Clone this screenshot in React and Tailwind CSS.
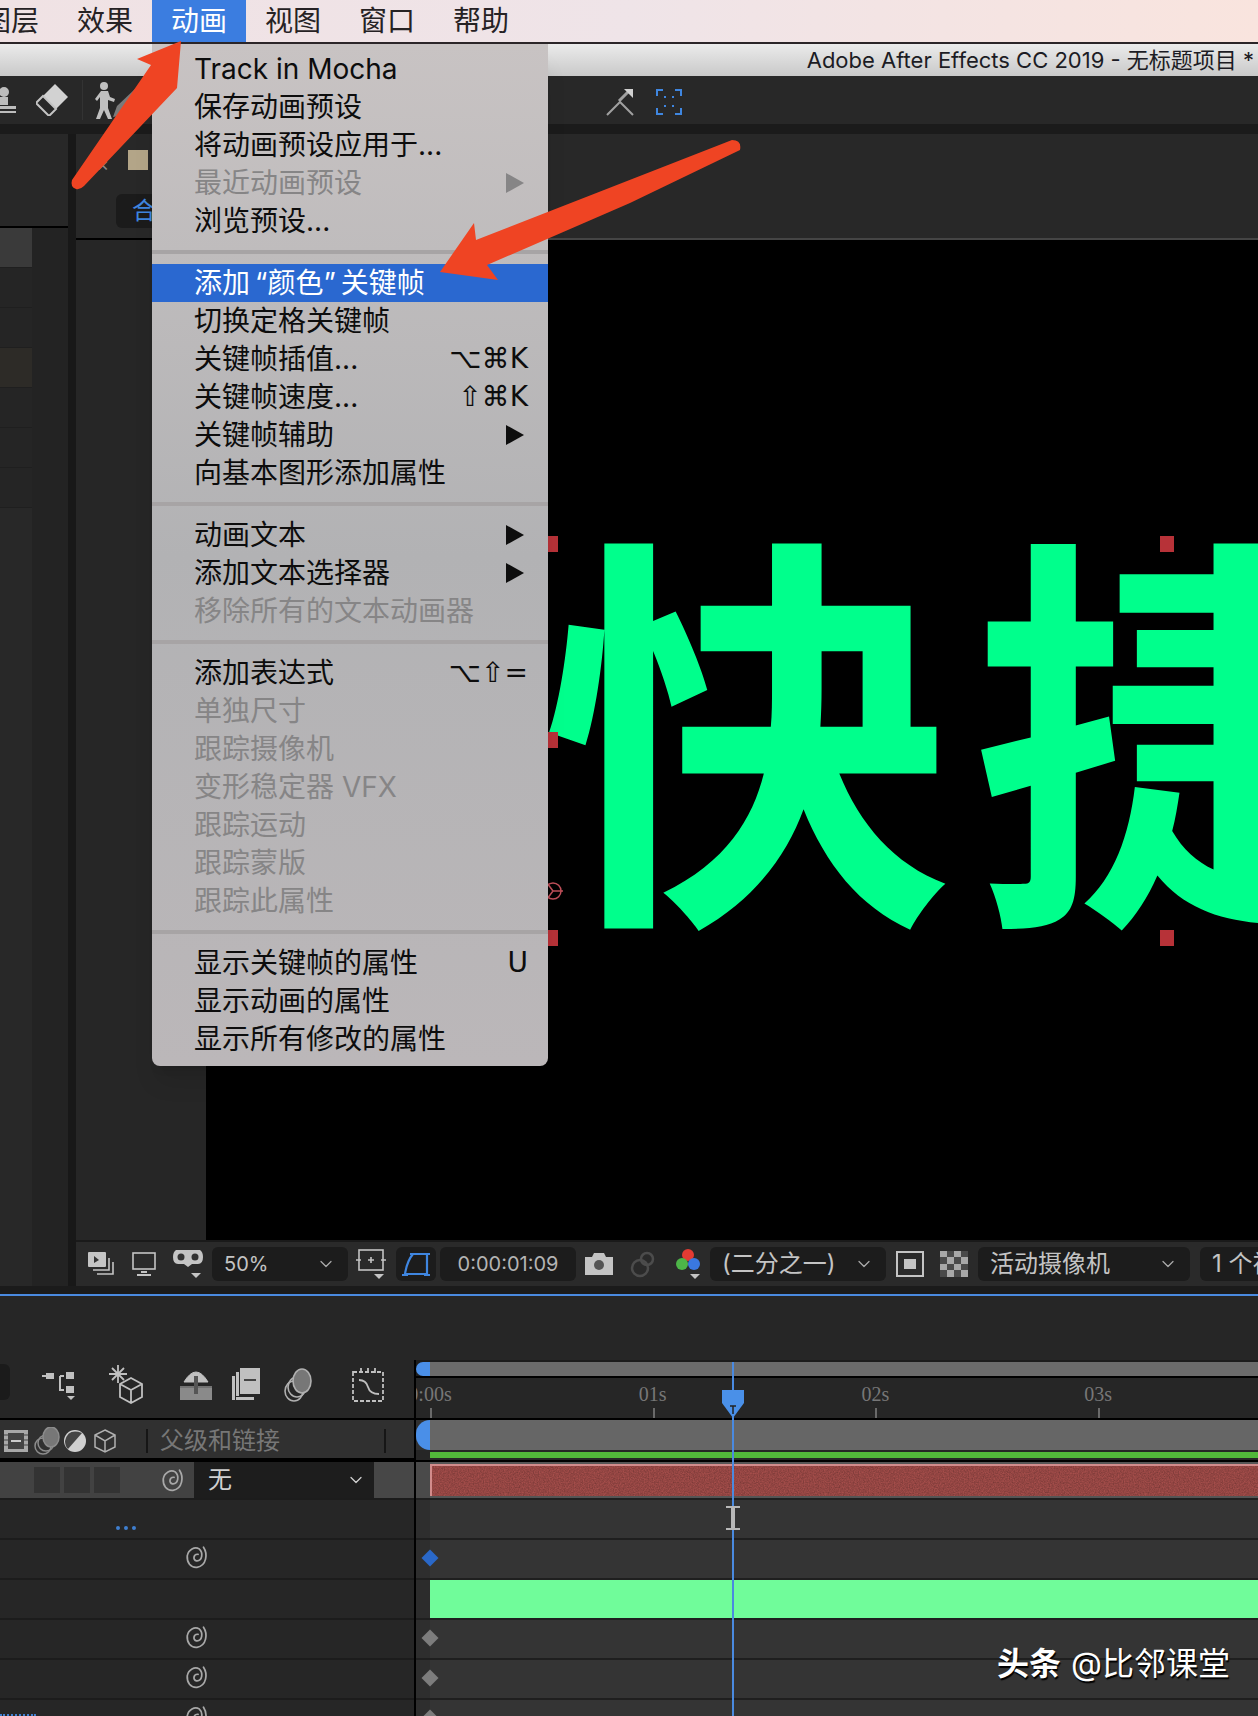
import { ChevronDown } from "lucide-react";

// Top menu bar entries; -ml-9 on the bar clips the first one like the screenshot
const TOP_MENU = ["图层", "效果", "动画", "视图", "窗口", "帮助"];

const MENU_GROUPS = [
  [
    { label: "Track in Mocha" },
    { label: "保存动画预设" },
    { label: "将动画预设应用于..." },
    { label: "最近动画预设", off: true, arrow: true },
    { label: "浏览预设..." },
  ],
  [
    { label: "添加\u2009“颜色”\u2009关键帧", active: true },
    { label: "切换定格关键帧" },
    { label: "关键帧插值...", keys: "⌥⌘K" },
    { label: "关键帧速度...", keys: "⇧⌘K" },
    { label: "关键帧辅助", arrow: true },
    { label: "向基本图形添加属性" },
  ],
  [
    { label: "动画文本", arrow: true },
    { label: "添加文本选择器", arrow: true },
    { label: "移除所有的文本动画器", off: true },
  ],
  [
    { label: "添加表达式", keys: "⌥⇧=" },
    { label: "单独尺寸", off: true },
    { label: "跟踪摄像机", off: true },
    { label: "变形稳定器 VFX", off: true },
    { label: "跟踪运动", off: true },
    { label: "跟踪蒙版", off: true },
    { label: "跟踪此属性", off: true },
  ],
  [
    { label: "显示关键帧的属性", keys: "U" },
    { label: "显示动画的属性" },
    { label: "显示所有修改的属性" },
  ],
];

const LEFT_ROWS = ["bg-[#3a3a3a]", "bg-[#252525]", "bg-[#252525]", "bg-[#2d2b27]", "bg-[#252525]", "bg-[#252525]", "bg-[#252525]"];

const RULER = ["0:00s", "01s", "02s", "03s"];

function Spiral({ className }) {
  return (
    <svg viewBox="0 0 24 24" fill="none" stroke="#a8a8a8" strokeWidth="1.6" strokeLinecap="round" className={className}>
      <path d="M18 3C22 9 21 20 12 21.5C6 22 2.500 17 3 11C4 5 10 2 14 4.500C18 8 17 16 11.500 15.500C8 15 8.500 9 13 9.500" />
    </svg>
  );
}

function MenuRow({ item }) {
  const color = item.active ? "bg-[#2a68d0] text-white" : item.off ? "text-[#868586]" : "text-[#0d0d0d]";
  return (
    <div className={`flex h-9.5 items-center justify-between pl-10.5 pr-5 ${color}`}>
      <span>{item.label}</span>
      {item.keys && <span className="font-['DejaVu_Sans',sans-serif]">{item.keys}</span>}
      {item.arrow && (
        <svg viewBox="0 0 18 20" className="mr-1 h-5 w-4.5">
          <path d="M0 0L18 10L0 20Z" fill={item.off ? "#868586" : "#0d0d0d"} />
        </svg>
      )}
    </div>
  );
}

function Select({ text, className, small }) {
  return (
    <div className={`flex h-8.5 shrink-0 items-center justify-between rounded-md bg-[#1c1c1c] px-3 text-[#c4c4c4] ${className} ${small ? "text-xl" : "text-2xl"}`}>
      <span className="whitespace-nowrap">{text}</span>
      <ChevronDown size={20} strokeWidth={1.5} className="text-[#aaaaaa]" />
    </div>
  );
}

function ViewerFooter() {
  return (
    <div className="flex h-11.5 items-center overflow-hidden border-t-2 border-[#1a1a1a] bg-[#2a2a2a] pl-3">
      <svg viewBox="0 0 26 24" className="w-6.5 shrink-0">
        <rect x="0" y="0" width="18" height="15" rx="1" fill="#c4c4c4" />
        <path d="M6 4L11 8L6 11Z" fill="#333" />
        <path d="M21 6V18H5M25 10V22H9" stroke="#c4c4c4" strokeWidth="1.6" fill="none" />
      </svg>
      <svg viewBox="0 0 24 24" className="ml-4.5 w-6 shrink-0" fill="none" stroke="#c4c4c4" strokeWidth="1.600">
        <rect x="1" y="1" width="22" height="16" />
        <path d="M9 20H15M5 23H19" strokeWidth="2" />
      </svg>
      <svg viewBox="0 0 32 30" className="ml-4 w-8 shrink-0">
        <path d="M4 1H28Q31 3 31 8Q31 15 26 15H20L16 18L12 15H6Q1 15 1 8Q1 3 4 1Z" fill="#c4c4c4" />
        <circle cx="9" cy="8" r="3.500" fill="#333" />
        <circle cx="23" cy="8" r="3.500" fill="#333" />
        <path d="M19 24H29L24 29Z" fill="#c4c4c4" />
      </svg>
      <Select text="50%" className="ml-2 w-34" small />
      <svg viewBox="0 0 30 32" className="ml-2 w-7.5 shrink-0" fill="none" stroke="#c4c4c4" strokeWidth="1.600">
        <rect x="3" y="2" width="24" height="20" />
        <path d="M15 9V15M12 12H18M0 12H5M25 12H30" />
        <path d="M18 26H28L23 31Z" fill="#c4c4c4" stroke="none" />
      </svg>
      <div className="ml-2.5 flex h-8.5 w-10 shrink-0 items-center justify-center rounded-md bg-[#1c1c1c]">
        <svg viewBox="0 0 28 26" className="w-7" fill="none" stroke="#3f86e0" strokeWidth="2.200">
          <path d="M3 23H25V3H11Q5 10 3 23Z" />
          <path d="M0 24H6M22 24H28M8 3H13M22 3H28" />
        </svg>
      </div>
      <div className="ml-1 flex h-8.5 w-34 shrink-0 items-center justify-center rounded-md bg-[#1c1c1c] text-xl text-[#b4b4b4]">0:00:01:09</div>
      <svg viewBox="0 0 30 24" className="ml-2 w-7.5 shrink-0">
        <path d="M1 5H8L10 1H20L22 5H29V23H1Z" fill="#c4c4c4" />
        <circle cx="15" cy="13" r="5" fill="#555" />
      </svg>
      <svg viewBox="0 0 28 28" className="ml-4 w-7 shrink-0" fill="none" stroke="#4c4c4c" strokeWidth="2.500">
        <circle cx="10" cy="18" r="8" />
        <circle cx="17" cy="9" r="6" />
      </svg>
      <svg viewBox="0 0 24 32" className="ml-4.5 w-6 shrink-0">
        <circle cx="12" cy="7" r="6" fill="#e33b33" />
        <circle cx="6" cy="16" r="6" fill="#4db548" />
        <circle cx="18" cy="16" r="6" fill="#3a78e0" />
        <path d="M14 26H24L19 31Z" fill="#c4c4c4" />
      </svg>
      <Select text="(二分之一)" className="ml-2.5 w-44" />
      <svg viewBox="0 0 28 26" className="ml-2.5 w-7 shrink-0">
        <rect x="1" y="1" width="26" height="24" fill="none" stroke="#c4c4c4" strokeWidth="2" />
        <rect x="8" y="8" width="12" height="10" fill="#c4c4c4" />
      </svg>
      <svg viewBox="0 0 28 26" className="ml-4 w-7 shrink-0">
        <rect x="0" y="0" width="28" height="26" fill="#a8a8a8" />
        <path d="M7 0H14V6H7ZM21 0H28V6H21ZM0 6H7V13H0ZM14 6H21V13H14ZM7 13H14V19H7ZM21 13H28V19H21ZM0 19H7V26H0ZM14 19H21V26H14Z" fill="#4a4a4a" />
      </svg>
      <Select text="活动摄像机" className="ml-2.5 w-53" />
      <Select text="1 个视图" className="ml-2.5 w-40" />
    </div>
  );
}

function TimelineIcons() {
  return (
    <div className="flex items-start pt-1">
      <div className="h-9 w-2.5 rounded-r-md bg-[#1b1b1b]" />
      <svg viewBox="0 0 34 32" className="ml-8 mt-1 w-8.5 shrink-0" fill="none" stroke="#c0c0c0" strokeWidth="2">
        <path d="M0 8H8M18 8V22H22M18 8H22" />
        <rect x="4" y="5" width="8" height="6" fill="#c0c0c0" stroke="none" />
        <rect x="24" y="4" width="8" height="7" fill="#c0c0c0" stroke="none" />
        <rect x="24" y="18" width="8" height="7" fill="#c0c0c0" stroke="none" />
        <path d="M25 28H33L29 32Z" fill="#c0c0c0" stroke="none" />
      </svg>
      <svg viewBox="0 0 36 40" className="ml-8 w-9 shrink-0" fill="none" stroke="#c0c0c0" strokeWidth="1.800">
        <path d="M10 1V19M1 10H19M4 4L16 16M16 4L4 16" />
        <path d="M23 14L34 20V33L23 39L12 33V20ZM12 20L23 26L34 20M23 26V39" />
      </svg>
      <svg viewBox="0 0 32 32" className="ml-9 mt-1 w-8 shrink-0">
        <rect x="0" y="20" width="32" height="12" fill="#8a8a8a" />
        <path d="M0 19H32M4 14Q16 -6 28 14Z" fill="#c0c0c0" stroke="#c0c0c0" />
        <rect x="14" y="8" width="4" height="18" fill="#555" />
      </svg>
      <svg viewBox="0 0 28 32" className="ml-5 mt-1 w-7 shrink-0">
        <rect x="8" y="0" width="20" height="26" fill="#c0c0c0" />
        <rect x="4" y="4" width="3" height="24" fill="#c0c0c0" />
        <rect x="0" y="8" width="3" height="24" fill="#c0c0c0" />
        <rect x="4" y="29" width="18" height="3" fill="#c0c0c0" />
        <path d="M12 12H24" stroke="#444" strokeWidth="2" />
      </svg>
      <svg viewBox="0 0 28 34" className="ml-6 mt-1 w-7 shrink-0" fill="none" stroke="#b0b0b0" strokeWidth="1.600">
        <ellipse cx="10" cy="23" rx="9" ry="10" />
        <ellipse cx="13" cy="19" rx="9" ry="10" />
        <ellipse cx="18" cy="13" rx="9" ry="12" fill="#777" />
      </svg>
      <svg viewBox="0 0 32 34" className="ml-10 mt-1 w-8 shrink-0" fill="none" stroke="#c0c0c0" strokeWidth="1.800">
        <rect x="1" y="4" width="30" height="29" strokeDasharray="4 2" />
        <path d="M9 0V5M16 0V5M23 0V5" />
        <path d="M7 12Q14 12 16 19T27 26" />
      </svg>
    </div>
  );
}

function HeaderIcons() {
  return (
    <div className="flex h-full items-center border-b-2 border-black bg-[#303030] pt-1">
      <svg viewBox="0 0 24 22" className="ml-1 w-6 shrink-0">
        <rect width="24" height="22" fill="#a8a8a8" />
        <path d="M4 3H20V19H4Z" fill="#444" />
        <path d="M7 11H17" stroke="#ccc" strokeWidth="2" />
        <path d="M0 5H4M0 10H4M0 15H4M20 5H24M20 10H24M20 15H24" stroke="#444" />
      </svg>
      <svg viewBox="0 0 26 28" className="ml-1.5 w-6.5 shrink-0" fill="none" stroke="#8c8c8c" strokeWidth="1.500">
        <ellipse cx="9" cy="19" rx="8" ry="8" />
        <ellipse cx="12" cy="16" rx="8" ry="8" />
        <ellipse cx="17" cy="10" rx="8" ry="10" fill="#777" />
      </svg>
      <svg viewBox="0 0 22 22" className="ml-1 w-5.5 shrink-0">
        <circle cx="11" cy="11" r="11" fill="#d0d0d0" />
        <path d="M4 19L18 3Q4 -2 1 11Q1 16 4 19Z" fill="#444" />
      </svg>
      <svg viewBox="0 0 22 24" className="ml-2 w-5.5 shrink-0" fill="none" stroke="#b0b0b0" strokeWidth="1.500">
        <path d="M11 1L21 6V18L11 23L1 18V6ZM1 6L11 12L21 6M11 12V23" />
      </svg>
      <div className="ml-7.5 h-6 w-0.5 bg-[#161616]" />
      <span className="ml-3 text-2xl whitespace-nowrap text-[#777777]">父级和链接</span>
      <div className="ml-26 h-6 w-0.5 bg-[#161616]" />
    </div>
  );
}

function KeyRow({ spiral, dots, accent, green, cut }) {
  return (
    <div className={`flex shrink-0 ${cut ? "h-5" : "h-10"}`}>
      <div className="flex w-103.5 items-start border-t-2 border-[#1c1c1c] bg-[#262626]">
        {spiral && <Spiral className="ml-46 mt-1 w-6.5" />}
        {dots && <div className="ml-29 mt-6.5 h-1 w-5 border-b-4 border-dotted border-[#3f7fd0]" />}
      </div>
      <div className="w-0.5 bg-black" />
      <div className="relative flex flex-1 border-t-2 border-[#1f1f1f]">
        <div className={`w-3.5 ${green ? "bg-[#2c2c2c]" : "bg-[#2e2e2e]"}`} />
        <div className={`flex-1 ${green ? "bg-[#70fc9a]" : "bg-[#343434]"}`} />
        {spiral && <div className={`absolute left-2 top-3 size-3 rotate-45 ${accent ? "bg-[#2a68c8]" : "bg-[#7d7d7d]"}`} />}
      </div>
    </div>
  );
}

function Timeline() {
  return (
    <div className="relative flex h-105 flex-col overflow-hidden bg-[#262626]">
      <div className="h-16 shrink-0" />

      <div className="flex h-14.5 shrink-0">
        <div className="w-103.5"><TimelineIcons /></div>
        <div className="w-0.5 bg-black" />
        <div className="relative flex-1 overflow-hidden">
          <div className="flex h-4.5 border-b-2 border-black bg-[#1c1c1c] pt-0.5">
            <div className="h-full w-3.5 rounded-l-full bg-[#4a8fe8]" />
            <div className="h-full flex-1 bg-[#6b6b6b]" />
          </div>
          {RULER.map((t, i) => (
            <div key={t} className="absolute bottom-0" style={{ left: 14 + i * 222.7 }}>
              <span className="absolute bottom-2.5 left-0 -translate-x-1/2 font-['Liberation_Serif',serif] text-xl text-[#777777]">{t}</span>
              <div className="h-2.5 w-0.5 bg-[#6a6a6a]" />
            </div>
          ))}
        </div>
      </div>

      <div className="flex h-10.5 shrink-0 border-t-2 border-black">
        <div className="w-103.5"><HeaderIcons /></div>
        <div className="w-0.5 bg-black" />
        <div className="flex flex-1 flex-col">
          <div className="flex h-7.5 bg-[#303030]">
            <div className="h-full w-3.5 rounded-l-full bg-[#4a8fe8]" />
            <div className="flex-1 bg-[#666666]" />
          </div>
          <div className="ml-3.5 mt-0.5 h-1.5 bg-[#52b83a]" />
        </div>
      </div>

      <div className="flex h-9.5 shrink-0 border-t-2 border-black">
        <div className="flex w-103.5 items-center bg-[#474747]">
          <div className="flex h-full w-48.5 items-center gap-1 bg-[#424242] pl-8.5">
            <div className="h-6.5 w-6.5 bg-[#333333]" />
            <div className="h-6.5 w-6.5 bg-[#333333]" />
            <div className="h-6.5 w-6.5 bg-[#333333]" />
            <Spiral className="ml-9 w-6.5" />
          </div>
          <div className="flex h-full w-45 items-center justify-between bg-[#1d1d1d] pl-3.5 pr-2 text-2xl text-[#d0d0d0]">
            <span>无</span>
            <ChevronDown size={20} strokeWidth={1.5} />
          </div>
        </div>
        <div className="w-0.5 bg-black" />
        <div className="flex flex-1 bg-[#555555]">
          <div className="w-3.5 bg-[#4a4a4a]" />
          <div className="relative my-0.5 flex-1 overflow-hidden border-l-2 border-t-2 border-[#d28c8c] bg-[#a54e4b]">
            <svg className="absolute inset-0 h-full w-full">
              <filter id="grain">
                <feTurbulence type="fractalNoise" baseFrequency="0.8" numOctaves="2" />
                <feColorMatrix values="0 0 0 0 0  0 0 0 0 0  0 0 0 0 0  0 0 0 1.200 -0.300" />
              </filter>
              <rect width="100%" height="100%" filter="url(#grain)" opacity="0.35" />
            </svg>
          </div>
        </div>
      </div>

      <KeyRow dots />
      <KeyRow spiral accent />
      <KeyRow green />
      <KeyRow spiral />
      <KeyRow spiral />
      <KeyRow spiral cut />

      {/* value text of the next row, only its top shows at the window edge */}
      <div className="absolute bottom-0 left-0 h-0.5 w-9 border-b-2 border-dotted border-[#3f7fd0]" />

      {/* playhead over the rows */}
      <div className="absolute bottom-0 left-183 top-16.5 w-0.5 bg-[#4a8ae0]" />
      <svg viewBox="0 0 22 28" className="absolute left-180.5 top-23.5 w-5.5">
        <path d="M0 0H22V13L11 28L0 13Z" fill="#4a90e8" />
        <path d="M8 16H14M11 16V24" stroke="#222" strokeWidth="1.500" />
      </svg>
      <svg viewBox="0 0 14 24" className="absolute left-181.5 top-52.5 w-3.5" fill="none" stroke="#b8b8b8" strokeWidth="2">
        <path d="M0 1H14M0 23H14" />
        <path d="M7 1V23" strokeWidth="4" />
      </svg>

      <div className="absolute bottom-7 right-7 flex items-baseline gap-2.5 text-[32px] text-white [text-shadow:1px_2px_1px_#000]">
        <span className="font-bold">头条</span>
        <span>@比邻课堂</span>
      </div>
    </div>
  );
}

export default function App() {
  return (
    <div className="relative flex h-screen w-full flex-col overflow-hidden bg-[#1b1b1b] font-['Inter','Noto_Sans_CJK_SC',sans-serif]">
      <div className="flex h-11 shrink-0 border-b-2 border-[#2b2528] bg-linear-to-r from-[#f0e2e4] via-[#efe4e8] to-[#f9e4de] text-[28px]">
        <div className="-ml-9 flex">
          {TOP_MENU.map((m) => (
            <div
              key={m}
              className={`flex w-23.5 items-center justify-center ${m === "动画" ? "bg-[#3b7de0] text-white" : "text-[#262224]"}`}
            >
              {m}
            </div>
          ))}
        </div>
      </div>

      <div className="flex h-8 shrink-0 items-center justify-end overflow-hidden whitespace-nowrap bg-linear-to-b from-[#ebebeb] to-[#c9c9c9] pr-1 text-[22px] text-[#1c1c24]">
        Adobe After Effects CC 2019 - 无标题项目 *
      </div>

      <div className="flex h-12 shrink-0 items-center bg-[#282828]">
        <svg viewBox="0 0 16 26" className="w-4 shrink-0">
          <circle cx="4" cy="5" r="5" fill="#bdbdbd" />
          <rect x="0" y="10" width="8" height="8" fill="#bdbdbd" />
          <path d="M0 19H16V22H0ZM0 24H16V26H0Z" fill="#bdbdbd" />
        </svg>
        <svg viewBox="0 0 32 32" className="ml-5 w-8 shrink-0">
          <path d="M19 0L32 13L20 25L7 12Z" fill="#d2d2d2" />
          <path d="M7 12L20 25L13 32L0 19Z" fill="none" stroke="#c4c4c4" strokeWidth="2" />
        </svg>
        <div className="ml-3.5 h-10 w-px bg-[#333333]" />
        <svg viewBox="0 0 44 38" className="ml-3 w-11 shrink-0">
          <circle cx="9" cy="5" r="4" fill="#c0c0c0" />
          <path d="M6 10H13L15 16L20 18L19 21L13 19V27L17 38H13L9 29L5 38H1L5 27V16L2 20L0 18Z" fill="#c0c0c0" />
          <path d="M22 25L40 8L44 12L30 34L18 36Z" fill="#7a7a7a" />
        </svg>

        <div className="ml-auto mr-144 mt-1 flex items-center gap-5.5">
          <svg viewBox="0 0 28 28" className="w-7 shrink-0" fill="none" stroke="#a0a0a0" strokeWidth="2">
            <path d="M1 27L14 14L27 27" />
            <path d="M13 13L22 4" strokeWidth="3" />
            <path d="M18 1H27V10Z" fill="#d0d0d0" stroke="none" />
          </svg>
          <svg viewBox="0 0 26 26" className="w-6.5 shrink-0" fill="none" stroke="#3f86e0" strokeWidth="2">
            <path d="M1 7V1H7M19 1H25V7M1 19V25H7M19 25H25V19M9 9V8H10M16 8H17V9M9 16V17H10M17 16V17H16" />
          </svg>
        </div>
      </div>
      <div className="h-2.5 shrink-0 bg-[#1b1b1b]" />

      <div className="flex min-h-0 flex-1">
        <div className="flex w-17 shrink-0 flex-col bg-[#232323]">
          <div className="h-23.5 shrink-0 border-b-2 border-black bg-[#282828]" />
          {LEFT_ROWS.map((bg, i) => (
            <div key={i} className={`h-10 w-8 shrink-0 border-b border-[#1f1f1f] ${bg}`} />
          ))}
          <div className="w-8 flex-1 bg-[#282828]" />
        </div>
        <div className="w-2 shrink-0 bg-[#181818]" />

        <div className="flex min-w-0 flex-1 flex-col">
          <div className="flex h-26.5 shrink-0 bg-[#282828]">
            <div className="relative w-32.5 border-b-2 border-black">
              <span className="absolute left-5 top-4 text-xl text-[#8a8a8a]">×</span>
              <div className="absolute left-13 top-4 size-5 bg-[#b3a588]" />
              <div className="absolute left-10 top-15 flex h-8.5 w-26 items-center rounded-md bg-[#1b1b1b] pl-4 text-2xl text-[#3f86e0]">合成</div>
            </div>
            <div className="flex-1 border-b-2 border-[#454545]" />
          </div>
          <div className="flex min-h-0 flex-1">
            <div className="w-32.5 shrink-0 bg-[#262626]" />
            <div className="relative flex-1 overflow-hidden bg-black">
              <div className="absolute left-84 top-74.5 whitespace-nowrap text-[410px] font-bold leading-none tracking-wider text-[#00ff8c]">快捷</div>
              <div className="absolute left-84 top-74 h-4 w-4 bg-[#b73238]" />
              <div className="absolute left-84 top-123 h-4 w-4 bg-[#b73238]" />
              <div className="absolute left-84 top-172.5 h-4 w-4 bg-[#b73238]" />
              <div className="absolute left-238.5 top-74 h-4 w-3.5 bg-[#b73238]" />
              <div className="absolute left-238.5 top-172.5 h-4 w-3.5 bg-[#b73238]" />
              <svg viewBox="0 0 22 22" className="absolute left-84 top-160 size-5.5" fill="none" stroke="#c0505a" strokeWidth="1.500">
                <circle cx="11" cy="11" r="8" />
                <path d="M11 11L21 11M11 11L5 3M11 11L5 19" />
              </svg>
            </div>
          </div>
          <ViewerFooter />
        </div>
      </div>

      <div className="h-2 shrink-0 bg-[#1b1b1b]" />
      <div className="h-0.5 shrink-0 bg-[#4a8ae0]" />
      <Timeline />

      {/* open menu */}
      <div className="absolute left-38 top-11 w-99 rounded-b-lg bg-linear-to-b from-[#c8c3c3] via-[#b2b2b4] to-[#bbb7b9] pb-2 pt-1.5 text-[28px] leading-none shadow-xl">
        {MENU_GROUPS.map((group, i) => (
          <div key={i}>
            {i > 0 && <div className="my-2.5 h-1 bg-[#a7a4a5]" />}
            {group.map((item) => (
              <MenuRow key={item.label} item={item} />
            ))}
          </div>
        ))}
      </div>

      {/* annotation arrows */}
      <svg className="pointer-events-none absolute inset-0 h-full w-full" fill="#ef4423">
        <path d="M181 41L137 59L151 65L72 180Q70 187 76 189Q80 190 84 186L177 88Z" />
        <path d="M440 272L474 223L476 240L732 140Q742 140 740 150L630 203L487 265L498 280Z" />
      </svg>
    </div>
  );
}
